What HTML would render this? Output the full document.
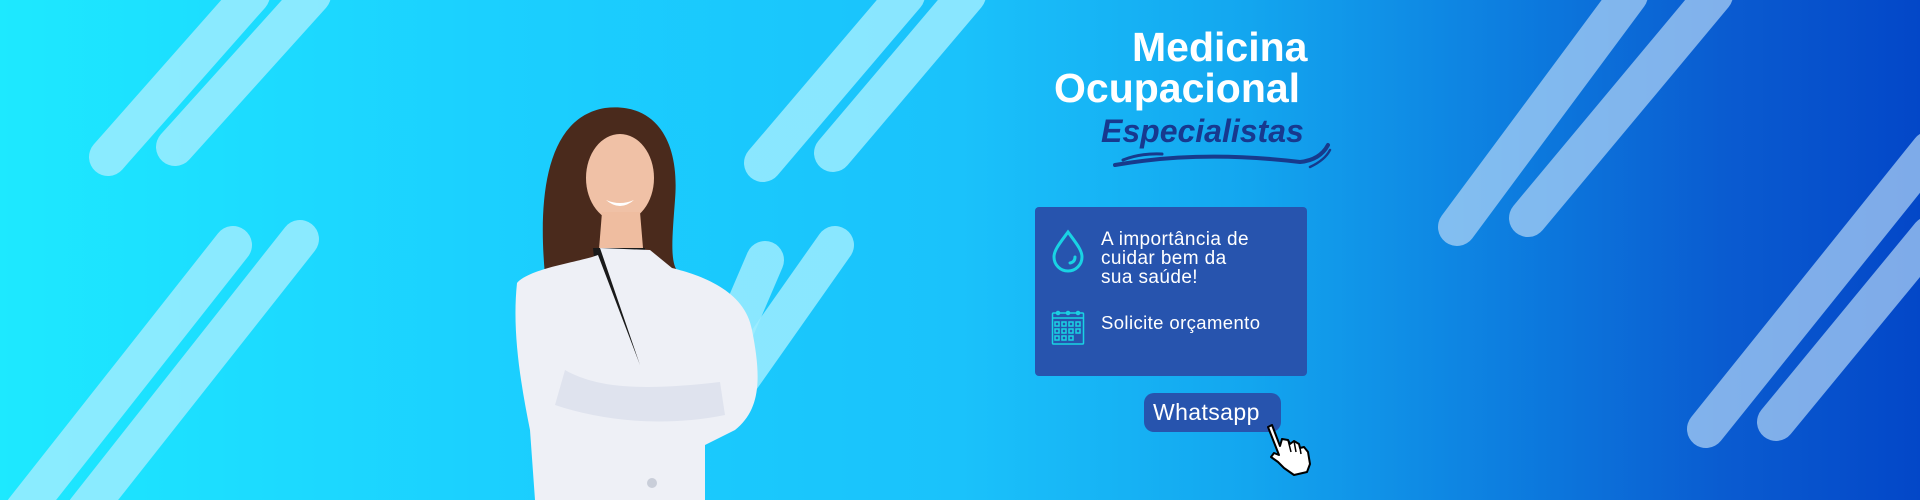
<!DOCTYPE html>
<html><head><meta charset="utf-8"><style>
*{margin:0;padding:0;box-sizing:border-box}
body{width:1920px;height:500px;overflow:hidden;font-family:"Liberation Sans",sans-serif}
#bg{position:absolute;left:0;top:0;width:1920px;height:500px;background:linear-gradient(90deg,#1de9ff 0%,#1bd0ff 25%,#1ac2fb 50%,#13a6ef 65%,#0d7fe0 78%,#0a5bd0 90%,#0347c8 100%)}
.t{position:absolute;color:#fff;font-weight:bold;white-space:nowrap}
</style></head><body>
<div id="bg"></div>
<svg width="1920" height="500" style="position:absolute;left:0;top:0">
<g stroke-linecap="round" stroke-width="38" fill="none">
<g stroke="#9eecff" stroke-opacity="0.85">
<line x1="108" y1="157" x2="251" y2="-5"/>
<line x1="175" y1="147" x2="312" y2="-5"/>
<line x1="24" y1="510" x2="233" y2="245"/>
<line x1="86" y1="510" x2="300" y2="239"/>
<line x1="763" y1="163" x2="906" y2="-5"/>
<line x1="833" y1="153" x2="967" y2="-5"/>
<line x1="735" y1="330" x2="765" y2="260"/>
<line x1="740" y1="380" x2="835" y2="245"/>
</g>
<g stroke="#b4d6f6" stroke-opacity="0.7">
<line x1="1457" y1="227" x2="1629" y2="-5"/>
<line x1="1528" y1="218" x2="1714" y2="-5"/>
<line x1="1706" y1="429" x2="1930" y2="150"/>
<line x1="1776" y1="422" x2="1930" y2="235"/>
</g>
</g>
<!-- woman -->
<path d="M545 275 C538 200 545 118 605 108 C655 102 680 140 675 200 C672 240 670 262 678 272 L560 282 Z" fill="#4a2a1c"/>
<ellipse cx="620" cy="178" rx="34" ry="44" fill="#f0c1a6"/>
<path d="M602 212 L640 212 L644 260 L598 262 Z" fill="#efbda0"/>
<path d="M606 200 Q620 212 634 200 Q620 206 606 200Z" fill="#fff"/>
<path d="M593 248 L645 248 L640 370 L605 370 Z" fill="#1a1a1a"/>
<path d="M517 283 C530 268 580 262 598 255 L640 365 L600 248 L650 250 L672 268 C700 275 745 290 752 330 C762 380 760 410 735 430 L705 445 L705 500 L535 500 L530 430 C520 380 512 330 517 283Z" fill="#eef0f6"/>
<path d="M565 370 C600 390 650 390 720 382 L725 415 C660 428 600 420 555 405 Z" fill="#dfe3ee"/>
<circle cx="652" cy="483" r="5" fill="#c9ced9"/>
<!-- swoosh -->
<path d="M1115 165 Q1200 150 1300 162 Q1320 160 1328 145" stroke="#173a8c" stroke-width="4" fill="none" stroke-linecap="round"/>
<path d="M1123 160 Q1140 153 1162 154" stroke="#173a8c" stroke-width="3" fill="none" stroke-linecap="round"/>
<path d="M1310 167 Q1325 160 1330 150" stroke="#173a8c" stroke-width="2.5" fill="none" stroke-linecap="round"/>
</svg>
<div class="t" style="left:1132px;top:24px;font-size:41px">Medicina</div>
<div class="t" style="left:1054px;top:65px;font-size:41px">Ocupacional</div>
<div class="t" style="left:1101px;top:113px;font-size:32px;font-style:italic;color:#17398f;font-weight:900">Especialistas</div>
<div style="position:absolute;left:1035px;top:207px;width:272px;height:169px;background:#2754ae;border-radius:4px"></div>
<svg width="40" height="44" style="position:absolute;left:1050px;top:229px">
<path d="M18 3 C10 14 4 21 4 28 A14 14 0 0 0 32 28 C32 21 26 14 18 3Z" fill="none" stroke="#19d3e4" stroke-width="3"/>
<path d="M25 28 Q25 33 20 34" fill="none" stroke="#19d3e4" stroke-width="3" stroke-linecap="round"/>
</svg>
<svg width="36" height="38" style="position:absolute;left:1051px;top:310px" fill="none" stroke="#19d3e4" stroke-width="1.5">
<rect x="1.5" y="3" width="31" height="31" rx="1"/>
<line x1="1.5" y1="8" x2="32.5" y2="8"/>
<circle cx="7" cy="3" r="1.5"/><circle cx="17" cy="3" r="1.5"/><circle cx="27" cy="3" r="1.5"/>
<g><rect x="4" y="12" width="4" height="4"/><rect x="11" y="12" width="4" height="4"/><rect x="18" y="12" width="4" height="4"/><rect x="25" y="12" width="4" height="4"/>
<rect x="4" y="19" width="4" height="4"/><rect x="11" y="19" width="4" height="4"/><rect x="18" y="19" width="4" height="4"/><rect x="25" y="19" width="4" height="4"/>
<rect x="4" y="26" width="4" height="4"/><rect x="11" y="26" width="4" height="4"/><rect x="18" y="26" width="4" height="4"/></g>
</svg>
<div style="position:absolute;left:1101px;top:230px;color:#fff;font-size:19px;line-height:19px;letter-spacing:0.4px">A importância de<br>cuidar bem da<br>sua saúde!</div>
<div style="position:absolute;left:1101px;top:312px;color:#fff;font-size:18.5px;letter-spacing:0.4px">Solicite orçamento</div>
<div style="position:absolute;left:1144px;top:393px;width:137px;height:39px;background:#2754ae;border-radius:10px;color:#fff;font-size:23px;line-height:39px;padding-left:9px;letter-spacing:0.4px">Whatsapp</div>
<svg width="50" height="56" style="position:absolute;left:1262px;top:422px">
<path d="M6 5 L10 3 L18 24 L20 17 L26 18 L28 22 L32 19 L37 22 L38 26 L42 25 L46 30 L48 42 L45 50 L32 53 L22 46 L16 40 L9 35 L12 31 L17 33 Z" fill="#fff" stroke="#000" stroke-width="2" stroke-linejoin="round"/>
<path d="M26 18 L29 30 M32 19 L34 30 M38 26 L39 32" stroke="#000" stroke-width="1.5"/>
</svg>
</body></html>
